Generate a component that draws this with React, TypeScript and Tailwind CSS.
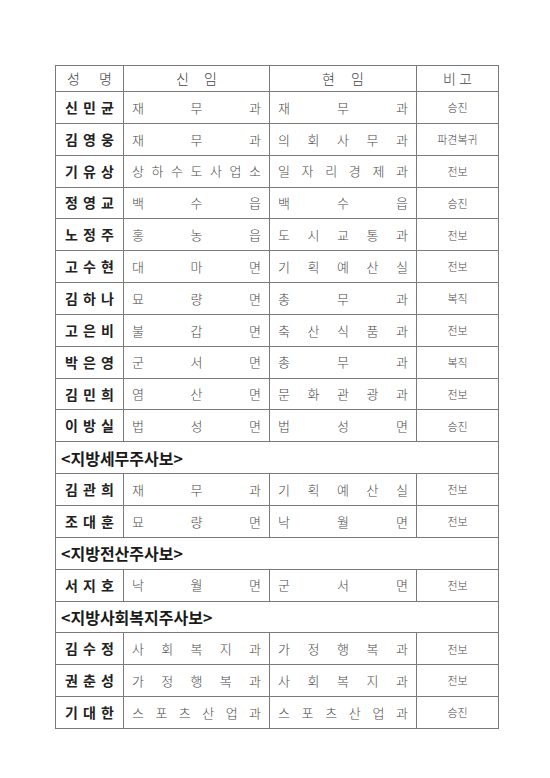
import React from "react"

type Row = { name: string; from: string; to: string; note: string }
type Item = { section: string } | Row

const items: Item[] = [
  { name: "신민균", from: "재무과", to: "재무과", note: "승진" },
  { name: "김영웅", from: "재무과", to: "의회사무과", note: "파견복귀" },
  { name: "기유상", from: "상하수도사업소", to: "일자리경제과", note: "전보" },
  { name: "정영교", from: "백수읍", to: "백수읍", note: "승진" },
  { name: "노정주", from: "홍농읍", to: "도시교통과", note: "전보" },
  { name: "고수현", from: "대마면", to: "기획예산실", note: "전보" },
  { name: "김하나", from: "묘량면", to: "총무과", note: "복직" },
  { name: "고은비", from: "불갑면", to: "축산식품과", note: "전보" },
  { name: "박은영", from: "군서면", to: "총무과", note: "복직" },
  { name: "김민희", from: "염산면", to: "문화관광과", note: "전보" },
  { name: "이방실", from: "법성면", to: "법성면", note: "승진" },
  { section: "<지방세무주사보>" },
  { name: "김관희", from: "재무과", to: "기획예산실", note: "전보" },
  { name: "조대훈", from: "묘량면", to: "낙월면", note: "전보" },
  { section: "<지방전산주사보>" },
  { name: "서지호", from: "낙월면", to: "군서면", note: "전보" },
  { section: "<지방사회복지주사보>" },
  { name: "김수정", from: "사회복지과", to: "가정행복과", note: "전보" },
  { name: "권춘성", from: "가정행복과", to: "사회복지과", note: "전보" },
  { name: "기대한", from: "스포츠산업과", to: "스포츠산업과", note: "승진" },
]

function Spread({ text, className }: { text: string; className: string }) {
  return (
    <div className={`flex justify-between ${className}`}>
      {text.split("").map((c, i) => (
        <span key={i}>{c}</span>
      ))}
    </div>
  )
}

const cell = "border border-[#7a7a7a] p-0"

export default function App() {
  return (
    <div className="w-[550px] h-[778px] bg-white pt-[65px] pl-[55px] font-['Noto_Sans_CJK_KR',sans-serif]">
      <table className="border-collapse table-fixed w-[443px] border border-[#555]">
        <colgroup>
          <col className="w-[68px]" />
          <col className="w-[146px]" />
          <col className="w-[147px]" />
          <col className="w-[82px]" />
        </colgroup>
        <thead>
          <tr className="h-[26px] text-[14px] text-[#444] font-light">
            <th className={`${cell} font-light`}>
              <Spread text="성명" className="px-[11px]" />
            </th>
            <th className={`${cell} font-light`}>
              <Spread text="신임" className="px-[52px]" />
            </th>
            <th className={`${cell} font-light`}>
              <Spread text="현임" className="px-[52px]" />
            </th>
            <th className={`${cell} font-light`}>
              <Spread text="비고" className="px-[26px]" />
            </th>
          </tr>
        </thead>
        <tbody>
          {items.map((it, i) =>
            "section" in it ? (
              <tr key={i} className="h-[31.85px]">
                <td colSpan={4} className={`${cell} pl-[5px] text-[16px] font-bold text-[#1a1a1a]`}>
                  {it.section}
                </td>
              </tr>
            ) : (
              <tr key={i} className="h-[31.85px]">
                <td className={cell}>
                  <Spread text={it.name} className="px-[9px] text-[14px] font-bold text-[#222]" />
                </td>
                <td className={cell}>
                  <Spread text={it.from} className="px-[8px] text-[13px] font-light text-[#4a4a4a]" />
                </td>
                <td className={cell}>
                  <Spread text={it.to} className="px-[8px] text-[13px] font-light text-[#4a4a4a]" />
                </td>
                <td className={`${cell} text-center text-[11px] font-light text-[#4a4a4a]`}>{it.note}</td>
              </tr>
            )
          )}
        </tbody>
      </table>
    </div>
  )
}
